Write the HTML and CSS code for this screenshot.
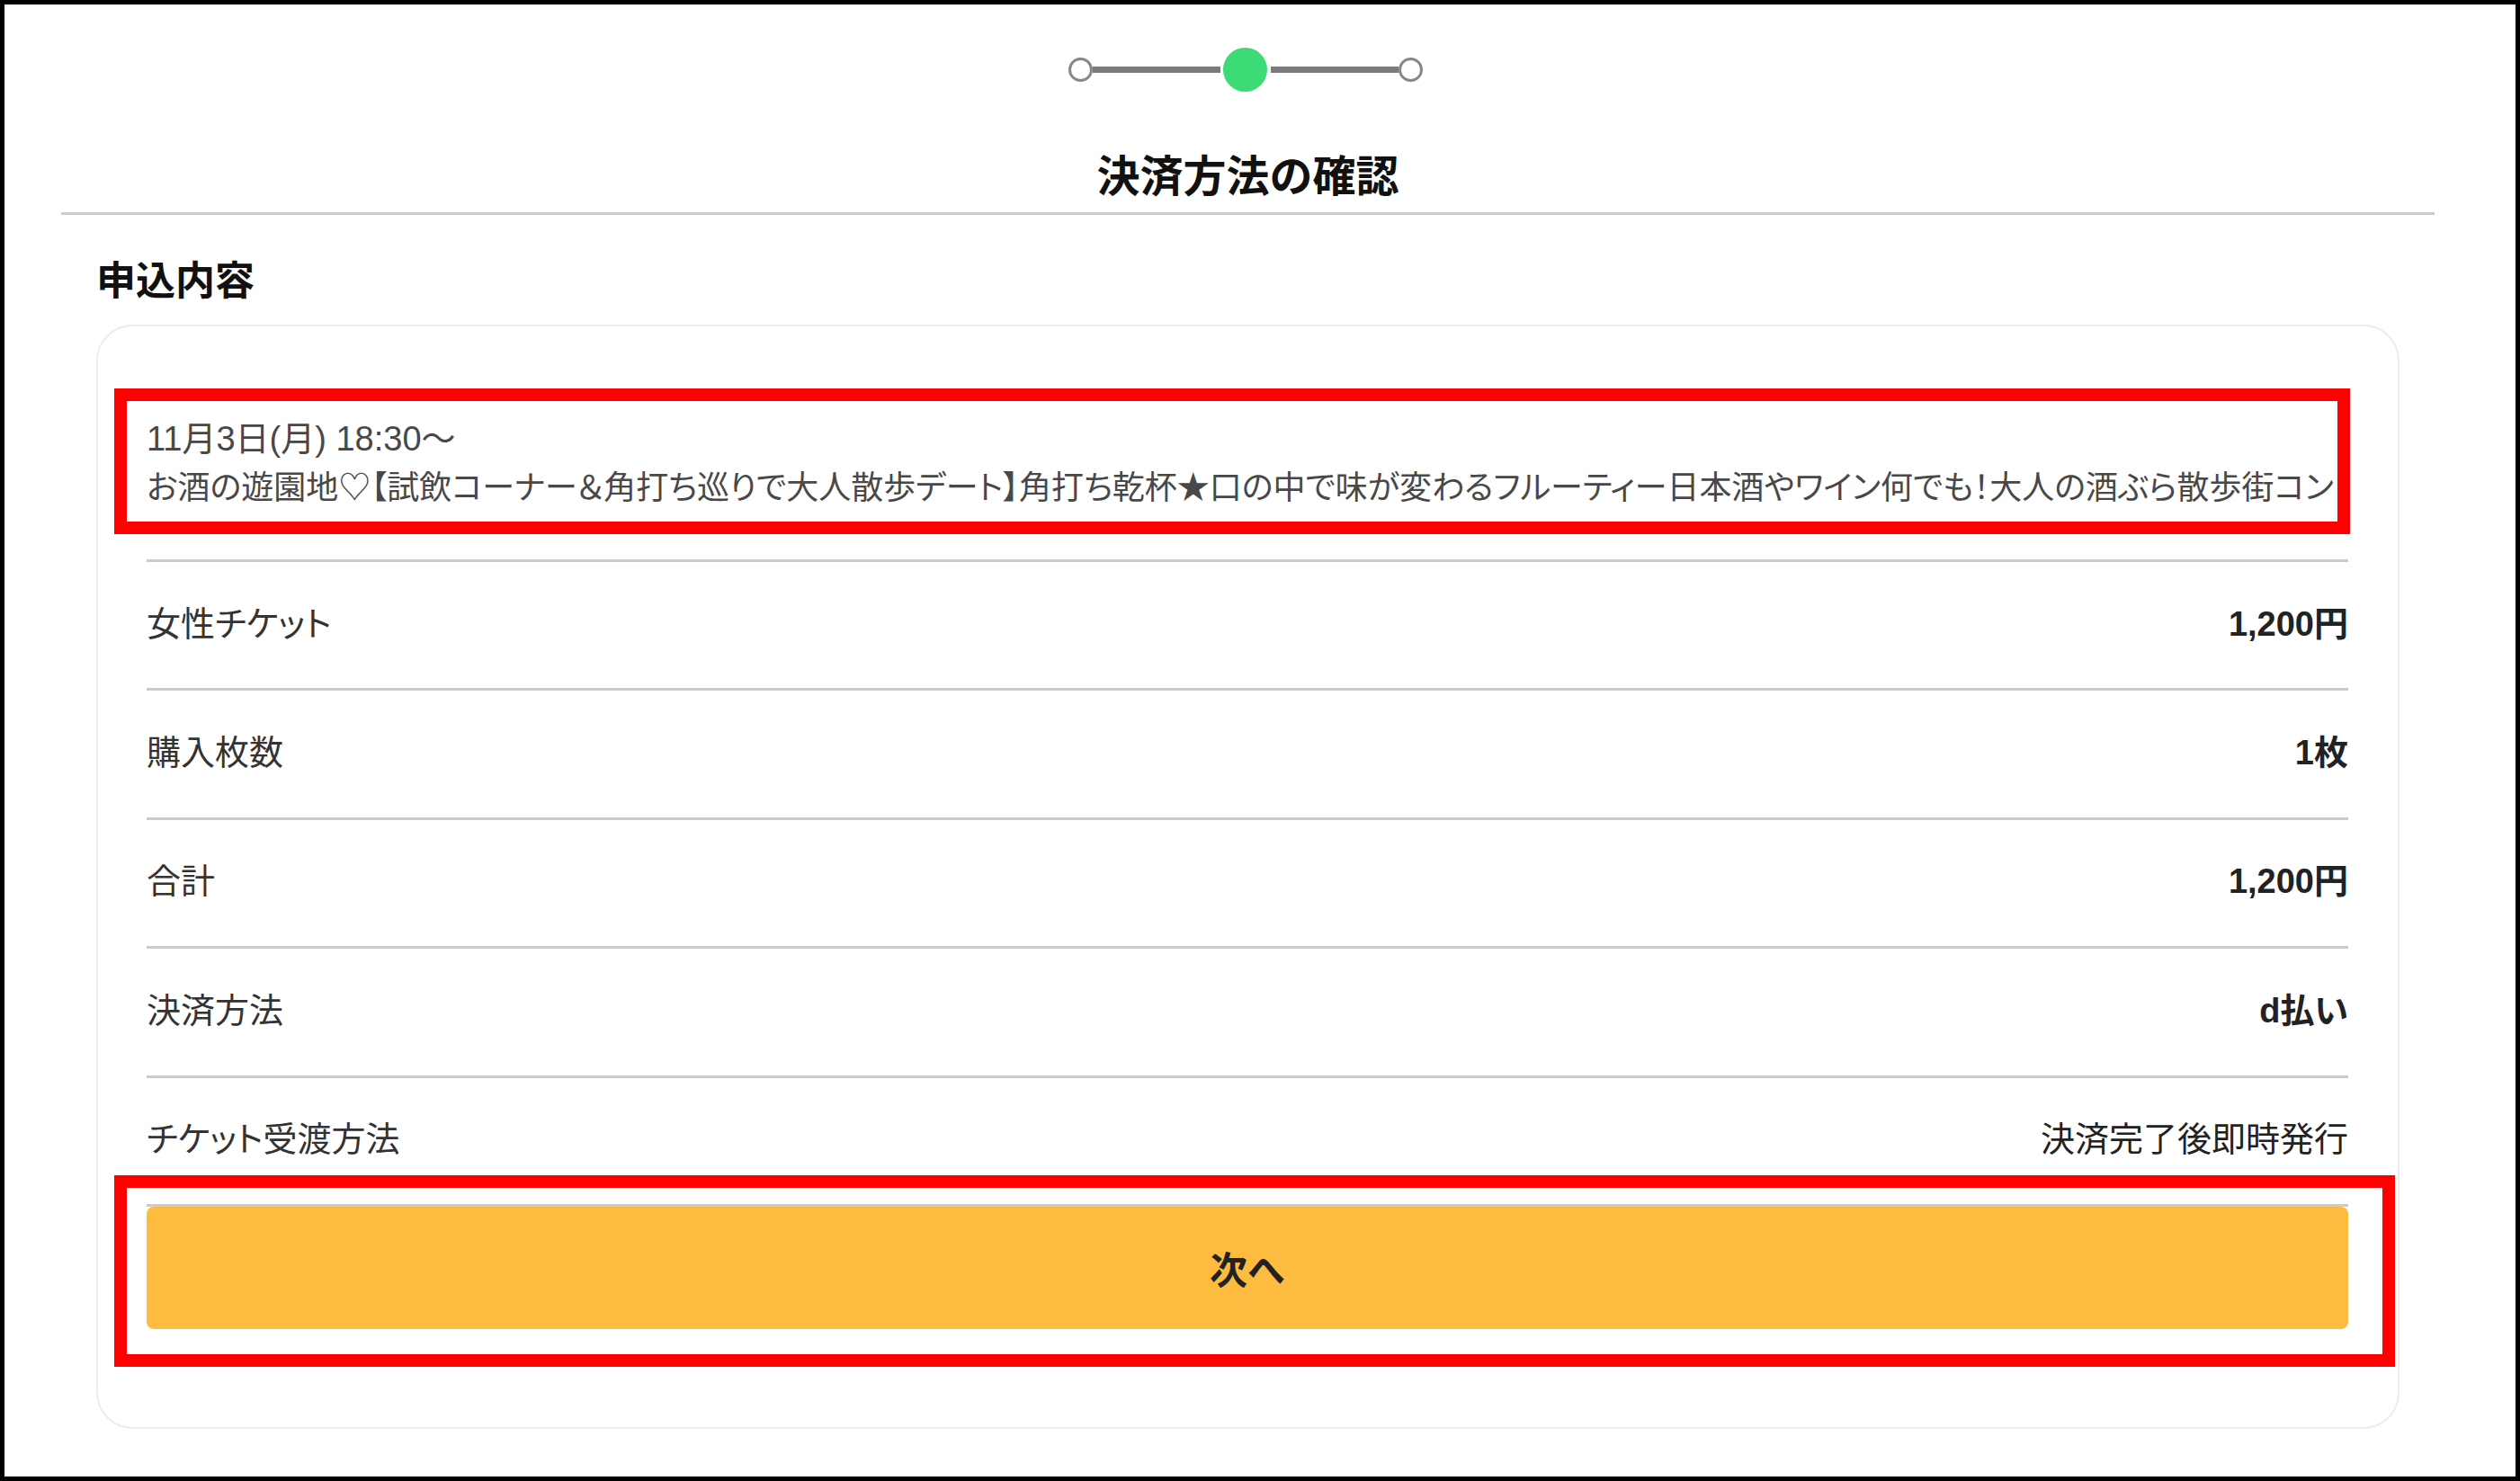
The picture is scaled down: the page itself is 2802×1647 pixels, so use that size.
FILE: index.html
```html
<!DOCTYPE html>
<html lang="ja">
<head>
    <meta charset="UTF-8">
    <meta name="viewport" content="width=device-width, initial-scale=1.0">
    <title>決済方法の確認</title>
    <link rel="stylesheet" href="styles.css">
</head>
<body>
    <div class="frame">
        <div class="wrapper">
            <div class="stepper">
                <span class="step"></span>
                <span class="step-line"></span>
                <span class="step step-active"></span>
                <span class="step-line"></span>
                <span class="step"></span>
            </div>
            <h1 class="page-title">決済方法の確認</h1>

            <section class="apply">
                <h2 class="section-title">申込内容</h2>
                <div class="card">
                    <div class="event">
                        <p class="event-date">11月3日(月) 18:30〜</p>
                        <p class="event-name">お酒の遊園地♡【試飲コーナー＆角打ち巡りで大人散歩デート】角打ち乾杯★口の中で味が変わるフルーティー日本酒やワイン何でも！大人の酒ぶら散歩街コン</p>
                        <span class="mark mark-event"></span>
                    </div>

                    <div class="summary">
                        <div class="row">
                            <span class="label">女性チケット</span>
                            <span class="value">1,200円</span>
                        </div>
                        <div class="row">
                            <span class="label">購入枚数</span>
                            <span class="value">1枚</span>
                        </div>
                        <div class="row">
                            <span class="label">合計</span>
                            <span class="value">1,200円</span>
                        </div>
                        <div class="row">
                            <span class="label">決済方法</span>
                            <span class="value">d払い</span>
                        </div>
                        <div class="row">
                            <span class="label">チケット受渡方法</span>
                            <span class="value value-plain">決済完了後即時発行</span>
                        </div>
                    </div>

                    <div class="actions">
                        <button type="button" class="next-btn">次へ</button>
                        <span class="mark mark-btn"></span>
                    </div>
                </div>
            </section>
        </div>
    </div>
</body>
</html>
```

FILE: styles.css
```css
* {
    box-sizing: border-box;
}
body {
    margin: 0;
    padding: 0;
    background-color: #fff;
    font-family: "Liberation Sans", "Noto Sans CJK JP", sans-serif;
    color: #333;
}
.frame {
    height: 1647px;
    border: 5px solid #000;
    background-color: #fff;
    overflow: hidden;
}
.wrapper {
    margin: 0 90px 0 63px;
}

/* stepper */
.stepper {
    display: flex;
    justify-content: center;
    align-items: center;
    padding: 48px 6px 0 0;
    height: 97px;
}
.step {
    width: 27px;
    height: 27px;
    border: 3px solid #888;
    border-radius: 50%;
    background-color: #fff;
}
.step-active {
    width: 49px;
    height: 49px;
    border: none;
    background-color: #3ddb76;
    margin: 0 4px 0 3px;
}
.step-line {
    width: 142px;
    height: 7px;
    background-color: #7a7a7a;
}

.page-title {
    margin: 65px 0 0;
    padding-bottom: 9px;
    border-bottom: 3px solid #cbcbcb;
    text-align: center;
    font-size: 48px;
    line-height: 60px;
    font-weight: bold;
    color: #111;
}

/* apply section */
.apply {
    padding: 0 39px;
}
.section-title {
    margin: 46px 0 20px;
    font-size: 44px;
    line-height: 56px;
    font-weight: bold;
    color: #111;
}
.card {
    border: 2px solid #ececec;
    border-radius: 40px;
    padding: 60px 55px 109px 54px;
}

.event {
    position: relative;
    padding: 44px 0 58px;
    font-size: 36px;
    line-height: 42px;
    color: #484848;
    font-feature-settings: "palt";
}
.event p {
    margin: 0;
    white-space: nowrap;
}
.event .event-date {
    font-size: 38px;
    margin-bottom: 13px;
}

.summary .row {
    display: flex;
    justify-content: space-between;
    align-items: center;
    height: 143.4px;
    padding-bottom: 10px;
    border-top: 3px solid #cbcbcb;
    font-size: 38px;
    font-feature-settings: "palt";
}
.label {
    color: #333;
}
.value {
    font-weight: bold;
    color: #222;
}
.value-plain {
    font-weight: normal;
}

.actions {
    position: relative;
    border-top: 3px solid #cbcbcb;
}
.next-btn {
    display: block;
    width: 100%;
    height: 136px;
    border: none;
    border-radius: 8px;
    background-color: #fdbc40;
    color: #222;
    font-family: "Liberation Sans", "Noto Sans CJK JP", sans-serif;
    font-size: 42px;
    font-weight: bold;
    cursor: pointer;
}

/* red annotation boxes */
.mark {
    position: absolute;
    border: 14px solid #ff0000;
    pointer-events: none;
}
.mark-event {
    top: 9px;
    left: -36px;
    right: -2px;
    bottom: 28px;
}
.mark-btn {
    top: -35px;
    left: -36px;
    right: -52px;
    bottom: -42px;
}
```
